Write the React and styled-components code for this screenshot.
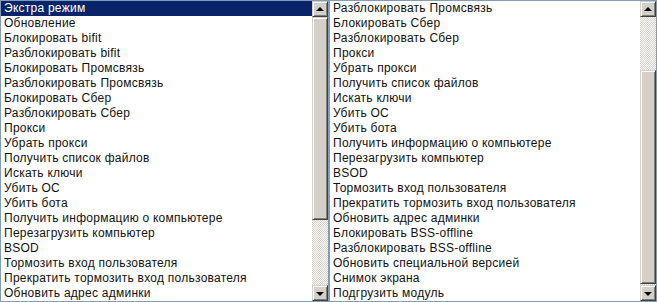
import styled, { createGlobalStyle } from "styled-components";

const commands = [
  "Экстра режим",
  "Обновление",
  "Блокировать bifit",
  "Разблокировать bifit",
  "Блокировать Промсвязь",
  "Разблокировать Промсвязь",
  "Блокировать Сбер",
  "Разблокировать Сбер",
  "Прокси",
  "Убрать прокси",
  "Получить список файлов",
  "Искать ключи",
  "Убить ОС",
  "Убить бота",
  "Получить информацию о компьютере",
  "Перезагрузить компьютер",
  "BSOD",
  "Тормозить вход пользователя",
  "Прекратить тормозить вход пользователя",
  "Обновить адрес админки",
  "Блокировать BSS-offline",
  "Разблокировать BSS-offline",
  "Обновить специальной версией",
  "Снимок экрана",
  "Подгрузить модуль",
];

function ListBox({ items, offset, selected, width, trackBefore, thumb }) {
  return (
    <Box $width={width}>
      <Items>
        {items.slice(offset, offset + 20).map((item, i) => (
          <Item key={item} $selected={offset + i === selected}>
            {item}
          </Item>
        ))}
      </Items>
      <ScrollBar>
        <ArrowButton>
          <Arrow $up />
        </ArrowButton>
        <Track style={{ height: trackBefore }} />
        <Thumb style={{ height: thumb }} />
        <Track $grow />
        <ArrowButton>
          <Arrow />
        </ArrowButton>
      </ScrollBar>
    </Box>
  );
}

export default function App() {
  return (
    <>
      <GlobalStyle />
      <Page>
        <ListBox
          items={commands}
          offset={0}
          selected={0}
          width={329}
          trackBefore={0}
          thumb={203}
        />
        <ListBox
          items={commands}
          offset={5}
          selected={-1}
          width={328}
          trackBefore={53}
          thumb={214}
        />
      </Page>
    </>
  );
}

const GlobalStyle = createGlobalStyle`
  body {
    margin: 0;
    background: #ffffff;
    font-family: Arial, "Liberation Sans", sans-serif;
  }
`;

const Page = styled.div`
  display: flex;
  width: 657px;
  height: 302px;
`;

const Box = styled.div`
  display: flex;
  box-sizing: border-box;
  width: ${(p) => p.$width}px;
  height: 302px;
  border: 1px solid #7f9db9;
  background: #ffffff;
`;

const Items = styled.ul`
  flex: 1;
  margin: 0;
  padding: 0;
  list-style: none;
  overflow: hidden;
`;

const Item = styled.li`
  height: 15px;
  line-height: 15px;
  padding-left: 3px;
  font-size: 12px;
  letter-spacing: 0.25px;
  white-space: nowrap;
  color: ${(p) => (p.$selected ? "#ffffff" : "#111111")};
  background: ${(p) => (p.$selected ? "#0a246a" : "transparent")};
`;

const ScrollBar = styled.div`
  display: flex;
  flex-direction: column;
  width: 16px;
`;

const raised = `
  box-sizing: border-box;
  background: #d4d0c8;
  border-top: 1px solid #d4d0c8;
  border-left: 1px solid #d4d0c8;
  border-right: 1px solid #404040;
  border-bottom: 1px solid #404040;
  box-shadow: inset 1px 1px 0 #ffffff, inset -1px -1px 0 #808080;
`;

const ArrowButton = styled.div`
  ${raised}
  display: flex;
  align-items: center;
  justify-content: center;
  height: 16px;
  flex: none;
`;

const Arrow = styled.span`
  width: 0;
  height: 0;
  border-left: 4px solid transparent;
  border-right: 4px solid transparent;
  ${(p) =>
    p.$up
      ? "border-bottom: 4px solid #000000; margin-top: -1px;"
      : "border-top: 4px solid #000000; margin-top: 1px;"}
`;

const Track = styled.div`
  flex: ${(p) => (p.$grow ? 1 : "none")};
  background-image: conic-gradient(
    #ffffff 25%,
    #d4d0c8 0 50%,
    #ffffff 0 75%,
    #d4d0c8 0
  );
  background-size: 2px 2px;
`;

const Thumb = styled.div`
  ${raised}
  flex: none;
`;
